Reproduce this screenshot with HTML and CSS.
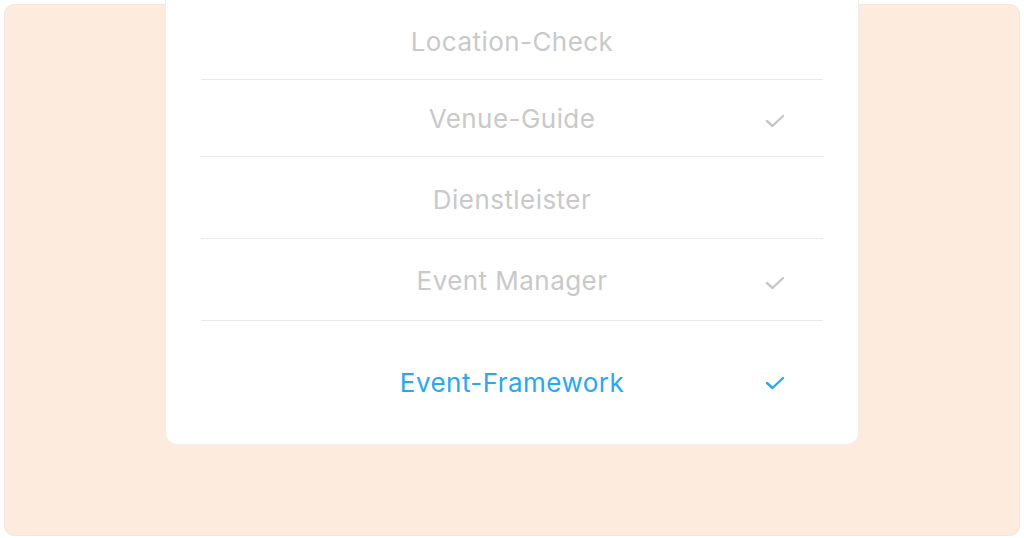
FILE: index.html
```html
<!DOCTYPE html>
<html lang="de">
<head>
<meta charset="utf-8">
<title>Leistungen</title>
<link rel="stylesheet" href="styles.css">
</head>
<body>
<div class="page">
  <div class="panel">
    <div class="card">
      <ul class="list">
        <li class="row row-1"><span class="label">Location-Check</span></li>
        <li class="row row-2"><span class="label">Venue-Guide</span>
          <svg class="check" viewBox="0 0 20 14" aria-hidden="true"><polyline points="2,7 7.5,12 18,2"/></svg></li>
        <li class="row row-3"><span class="label">Dienstleister</span></li>
        <li class="row row-4"><span class="label">Event Manager</span>
          <svg class="check" viewBox="0 0 20 14" aria-hidden="true"><polyline points="2,7 7.5,12 18,2"/></svg></li>
        <li class="row row-5 active"><span class="label">Event-Framework</span>
          <svg class="check" viewBox="0 0 20 14" aria-hidden="true"><polyline points="2,7 7.5,12 18,2"/></svg></li>
      </ul>
    </div>
  </div>
</div>
</body>
</html>
```

FILE: styles.css
```css
* { box-sizing: border-box; }
html, body { margin: 0; padding: 0; background: #ffffff; overflow: hidden; }
body { width: 1024px; height: 538px; font-family: "Inter", "Open Sans", sans-serif; }
.page { padding: 4px 4px 0 4px; }
.panel {
  height: 532px;
  background: #fdebdd;
  border: 1px solid #efe7e1;
  border-radius: 10px;
}
.card {
  width: 694px;
  margin: -25px auto 0;
  background: #ffffff;
  border: 1px solid #efeeed;
  border-radius: 12px;
  position: relative;
}
.list { list-style: none; margin: 0; padding: 0 35px; }
.row {
  display: grid;
  grid-template-columns: 1fr auto 1fr;
  align-items: center;
  border-bottom: 1px solid #e9e9e9;
  color: #c9c9c9;
  font-size: 26px;
  font-weight: 400;
  letter-spacing: 0.45px;
}
.row .label { grid-column: 2; }
.row .check {
  grid-column: 3;
  justify-self: end;
  margin-right: 38px;
  margin-top: 6px;
  width: 20px;
  height: 14px;
  fill: none;
  stroke: #c6c6c6;
  stroke-width: 2.4;
  stroke-linecap: round;
  stroke-linejoin: round;
}
.row-1 { height: 99px; padding-top: 22px; }
.row-2 { height: 77px; }
.row-3 { height: 82px; padding-top: 4px; }
.row-4 { height: 82px; padding-top: 1px; }
.row-5 { height: 123px; border-bottom: none; }
.active { color: #27a8ef; }
.active .check { stroke: #2aa8ee; margin-top: 0; }
```
